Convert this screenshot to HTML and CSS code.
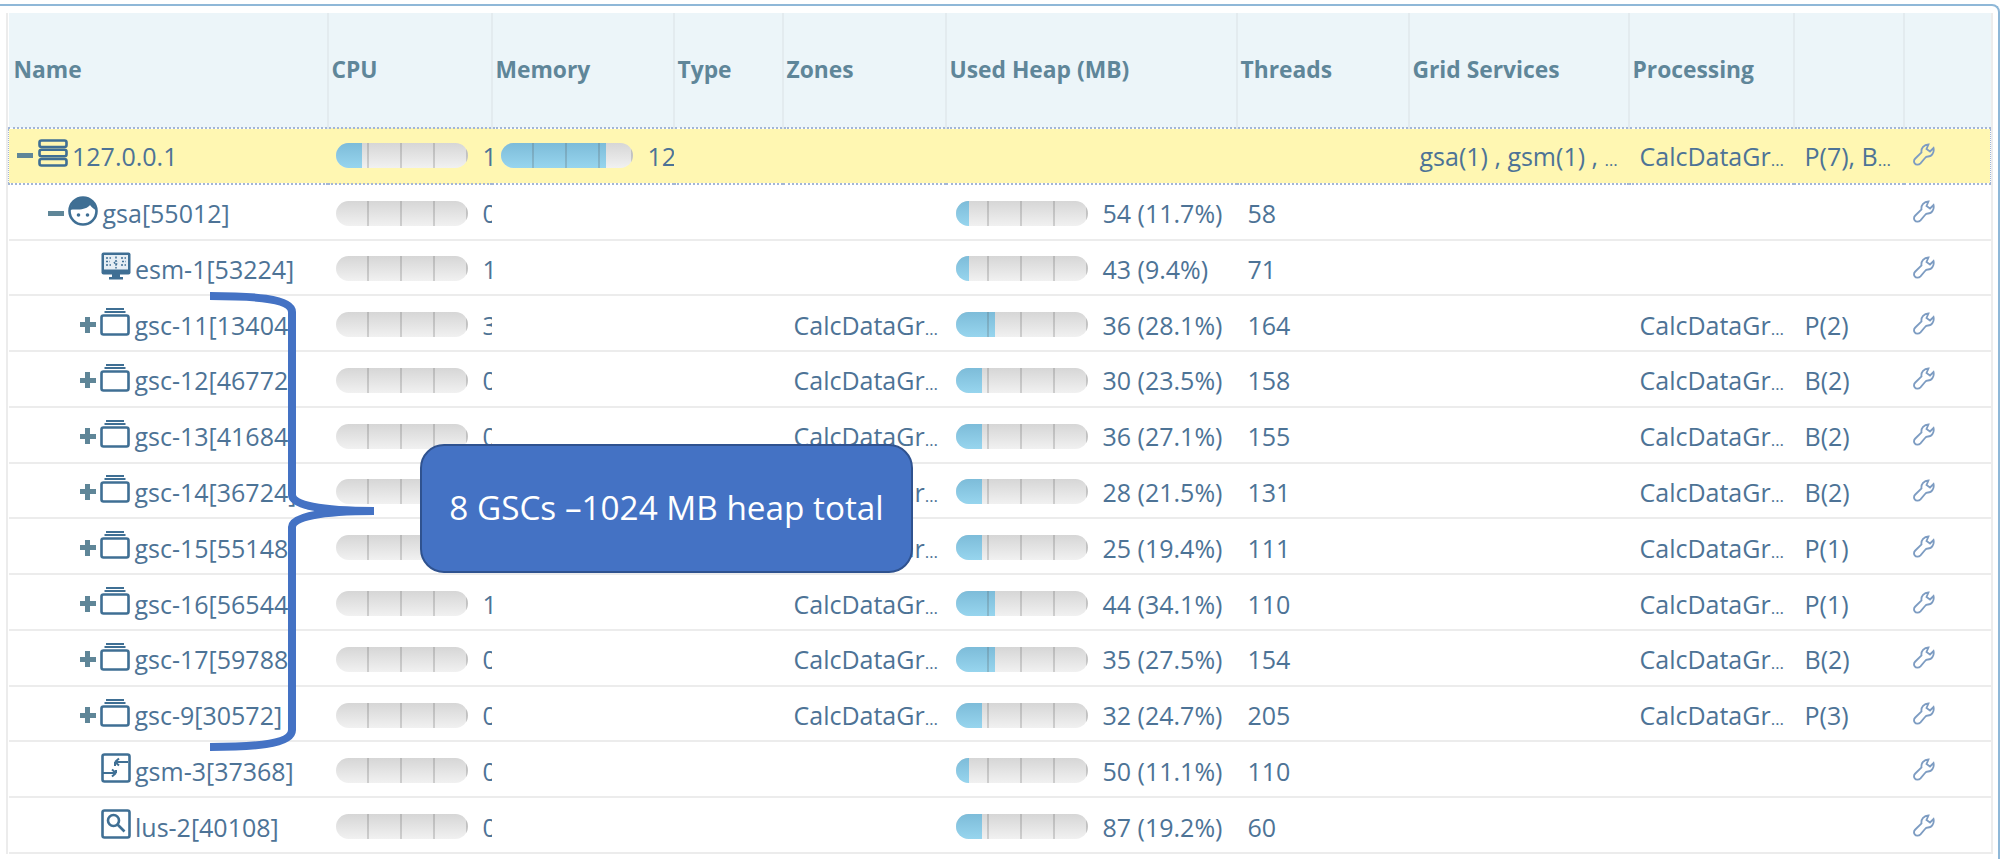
FILE: index.html
```html
<!DOCTYPE html>
<html lang="en">
<head>
    <meta charset="UTF-8">
    <meta name="viewport" content="width=device-width, initial-scale=1.0">
    <title>Hosts</title>
    <link rel="stylesheet" href="styles.css">
</head>
<body>
    <svg class="icon-defs" width="0" height="0">
        <symbol id="i-server" viewBox="0 0 30 28">
            <rect x="1.5" y="1.5" width="27" height="6.5" rx="2"/>
            <rect x="1.5" y="10.75" width="27" height="6.5" rx="2"/>
            <rect x="1.5" y="20" width="27" height="6.5" rx="2"/>
        </symbol>
        <symbol id="i-agent" viewBox="0 0 30 30">
            <circle cx="15" cy="15" r="13.5"/>
            <path class="solid" d="M2.5 14C3 6 8 1.5 15 1.5S27 6 27.5 14C25 12.5 23 10.5 22 9C20 12 14 14 8 13.5C6.5 13.4 4 13.5 2.5 14Z"/>
            <circle class="solid" cx="10.5" cy="19" r="1.8"/>
            <circle class="solid" cx="19.5" cy="19" r="1.8"/>
        </symbol>
        <symbol id="i-esm" viewBox="0 0 30 28">
            <rect class="solid" x="0.5" y="0.5" width="29" height="22" rx="2"/>
            <rect class="screen" x="3" y="3" width="24" height="14.5"/>
            <path class="solid" d="M11 22h8v3h3v2.500h-14v-2.500h3z"/>
            <path class="dots" d="M5 6h5M5 9.500h4M5 13h5M20 6h5M21 9.500h4M20 13h5M15 4.500v12M13 10l2 3 2-3"/>
        </symbol>
        <symbol id="i-gsc" viewBox="0 0 30 28">
            <path class="thin" d="M6 1h18M4.500 4h21"/>
            <rect x="1.500" y="7.500" width="27" height="19" rx="2"/>
        </symbol>
        <symbol id="i-gsm" viewBox="0 0 30 30">
            <rect x="1.500" y="1.500" width="27" height="27" rx="2"/>
            <path class="thin" d="M14 9h13M14 9l4-3.500M14 9l4 3.500M2 20h13M15 20l-4-3.500M15 20l-4 3.500M14 9v4M15 17v3"/>
        </symbol>
        <symbol id="i-lus" viewBox="0 0 30 30">
            <rect x="1.500" y="1.500" width="27" height="27" rx="2"/>
            <circle cx="12.500" cy="11.500" r="5.500"/>
            <path d="M16.500 15.500l7 7"/>
        </symbol>
        <symbol id="i-wrench" viewBox="0 0 22 23">
            <path d="M15.500 1.500L13.500 6L17 8.500L20.500 5C21.500 9 19 13.500 15 13.500C13.800 13.500 12.800 13.800 12 15L7.500 20.300C5.800 22 3 22.300 1.800 20.500C0.800 19 1 16.800 2.300 15.500L8.500 9.500C7.800 5 11 1.500 15.500 1.500Z"/>
        </symbol>
    </svg>

    <div class="panel">
        <div class="grid-wrap">
            <table class="host-table">
                <colgroup>
                    <col class="c-name"><col class="c-cpu"><col class="c-mem"><col class="c-type"><col class="c-zones">
                    <col class="c-heap"><col class="c-threads"><col class="c-services"><col class="c-proc"><col class="c-inst"><col class="c-act">
                </colgroup>
                <thead>
                    <tr>
                        <th>Name</th><th>CPU</th><th>Memory</th><th>Type</th><th>Zones</th>
                        <th>Used Heap (MB)</th><th>Threads</th><th>Grid Services</th><th>Processing</th><th></th><th></th>
                    </tr>
                </thead>
                <tbody>
                    <tr class="selected">
                        <td><div class="name level-0"><span class="toggle minus"></span><svg class="icon"><use href="#i-server"/></svg><span>127.0.0.1</span></div></td>
                        <td class="cpu"><div class="metric"><div class="meter"><div class="meter-fill" style="width:20%"></div></div><span>1</span></div></td>
                        <td class="mem"><div class="metric"><div class="meter"><div class="meter-fill" style="width:80%"></div></div><span>12</span></div></td>
                        <td></td><td></td><td></td><td></td>
                        <td>gsa(1) , gsm(1) , <span class="more">…</span></td>
                        <td>CalcDataGr<span class="more">…</span></td>
                        <td>P(7), B<span class="more">…</span></td>
                        <td><svg class="wrench"><use href="#i-wrench"/></svg></td>
                    </tr>
                    <tr>
                        <td><div class="name level-1"><span class="toggle minus"></span><svg class="icon tall"><use href="#i-agent"/></svg><span>gsa[55012]</span></div></td>
                        <td class="cpu"><div class="metric"><div class="meter"></div><span>0</span></div></td>
                        <td></td><td></td><td></td>
                        <td class="heap"><div class="metric"><div class="meter"><div class="meter-fill" style="width:10%"></div></div><span>54 (11.7%)</span></div></td>
                        <td>58</td><td></td><td></td><td></td>
                        <td><svg class="wrench"><use href="#i-wrench"/></svg></td>
                    </tr>
                    <tr>
                        <td><div class="name level-2"><svg class="icon"><use href="#i-esm"/></svg><span>esm-1[53224]</span></div></td>
                        <td class="cpu"><div class="metric"><div class="meter"></div><span>1</span></div></td>
                        <td></td><td></td><td></td>
                        <td class="heap"><div class="metric"><div class="meter"><div class="meter-fill" style="width:10%"></div></div><span>43 (9.4%)</span></div></td>
                        <td>71</td><td></td><td></td><td></td>
                        <td><svg class="wrench"><use href="#i-wrench"/></svg></td>
                    </tr>
                    <tr>
                        <td><div class="name level-1b"><span class="toggle plus"></span><svg class="icon"><use href="#i-gsc"/></svg><span>gsc-11[13404]</span></div></td>
                        <td class="cpu"><div class="metric"><div class="meter"></div><span>3</span></div></td>
                        <td></td><td></td><td>CalcDataGr<span class="more">…</span></td>
                        <td class="heap"><div class="metric"><div class="meter"><div class="meter-fill" style="width:30%"></div></div><span>36 (28.1%)</span></div></td>
                        <td>164</td><td></td><td>CalcDataGr<span class="more">…</span></td><td>P(2)</td>
                        <td><svg class="wrench"><use href="#i-wrench"/></svg></td>
                    </tr>
                    <tr>
                        <td><div class="name level-1b"><span class="toggle plus"></span><svg class="icon"><use href="#i-gsc"/></svg><span>gsc-12[46772]</span></div></td>
                        <td class="cpu"><div class="metric"><div class="meter"></div><span>0</span></div></td>
                        <td></td><td></td><td>CalcDataGr<span class="more">…</span></td>
                        <td class="heap"><div class="metric"><div class="meter"><div class="meter-fill" style="width:20%"></div></div><span>30 (23.5%)</span></div></td>
                        <td>158</td><td></td><td>CalcDataGr<span class="more">…</span></td><td>B(2)</td>
                        <td><svg class="wrench"><use href="#i-wrench"/></svg></td>
                    </tr>
                    <tr>
                        <td><div class="name level-1b"><span class="toggle plus"></span><svg class="icon"><use href="#i-gsc"/></svg><span>gsc-13[41684]</span></div></td>
                        <td class="cpu"><div class="metric"><div class="meter"></div><span>0</span></div></td>
                        <td></td><td></td><td>CalcDataGr<span class="more">…</span></td>
                        <td class="heap"><div class="metric"><div class="meter"><div class="meter-fill" style="width:20%"></div></div><span>36 (27.1%)</span></div></td>
                        <td>155</td><td></td><td>CalcDataGr<span class="more">…</span></td><td>B(2)</td>
                        <td><svg class="wrench"><use href="#i-wrench"/></svg></td>
                    </tr>
                    <tr>
                        <td><div class="name level-1b"><span class="toggle plus"></span><svg class="icon"><use href="#i-gsc"/></svg><span>gsc-14[36724]</span></div></td>
                        <td class="cpu"><div class="metric"><div class="meter"></div><span>0</span></div></td>
                        <td></td><td></td><td>CalcDataGr<span class="more">…</span></td>
                        <td class="heap"><div class="metric"><div class="meter"><div class="meter-fill" style="width:20%"></div></div><span>28 (21.5%)</span></div></td>
                        <td>131</td><td></td><td>CalcDataGr<span class="more">…</span></td><td>B(2)</td>
                        <td><svg class="wrench"><use href="#i-wrench"/></svg></td>
                    </tr>
                    <tr>
                        <td><div class="name level-1b"><span class="toggle plus"></span><svg class="icon"><use href="#i-gsc"/></svg><span>gsc-15[55148]</span></div></td>
                        <td class="cpu"><div class="metric"><div class="meter"></div><span>0</span></div></td>
                        <td></td><td></td><td>CalcDataGr<span class="more">…</span></td>
                        <td class="heap"><div class="metric"><div class="meter"><div class="meter-fill" style="width:20%"></div></div><span>25 (19.4%)</span></div></td>
                        <td>111</td><td></td><td>CalcDataGr<span class="more">…</span></td><td>P(1)</td>
                        <td><svg class="wrench"><use href="#i-wrench"/></svg></td>
                    </tr>
                    <tr>
                        <td><div class="name level-1b"><span class="toggle plus"></span><svg class="icon"><use href="#i-gsc"/></svg><span>gsc-16[56544]</span></div></td>
                        <td class="cpu"><div class="metric"><div class="meter"></div><span>1</span></div></td>
                        <td></td><td></td><td>CalcDataGr<span class="more">…</span></td>
                        <td class="heap"><div class="metric"><div class="meter"><div class="meter-fill" style="width:30%"></div></div><span>44 (34.1%)</span></div></td>
                        <td>110</td><td></td><td>CalcDataGr<span class="more">…</span></td><td>P(1)</td>
                        <td><svg class="wrench"><use href="#i-wrench"/></svg></td>
                    </tr>
                    <tr>
                        <td><div class="name level-1b"><span class="toggle plus"></span><svg class="icon"><use href="#i-gsc"/></svg><span>gsc-17[59788]</span></div></td>
                        <td class="cpu"><div class="metric"><div class="meter"></div><span>0</span></div></td>
                        <td></td><td></td><td>CalcDataGr<span class="more">…</span></td>
                        <td class="heap"><div class="metric"><div class="meter"><div class="meter-fill" style="width:30%"></div></div><span>35 (27.5%)</span></div></td>
                        <td>154</td><td></td><td>CalcDataGr<span class="more">…</span></td><td>B(2)</td>
                        <td><svg class="wrench"><use href="#i-wrench"/></svg></td>
                    </tr>
                    <tr>
                        <td><div class="name level-1b"><span class="toggle plus"></span><svg class="icon"><use href="#i-gsc"/></svg><span>gsc-9[30572]</span></div></td>
                        <td class="cpu"><div class="metric"><div class="meter"></div><span>0</span></div></td>
                        <td></td><td></td><td>CalcDataGr<span class="more">…</span></td>
                        <td class="heap"><div class="metric"><div class="meter"><div class="meter-fill" style="width:20%"></div></div><span>32 (24.7%)</span></div></td>
                        <td>205</td><td></td><td>CalcDataGr<span class="more">…</span></td><td>P(3)</td>
                        <td><svg class="wrench"><use href="#i-wrench"/></svg></td>
                    </tr>
                    <tr>
                        <td><div class="name level-2"><svg class="icon tall"><use href="#i-gsm"/></svg><span>gsm-3[37368]</span></div></td>
                        <td class="cpu"><div class="metric"><div class="meter"></div><span>0</span></div></td>
                        <td></td><td></td><td></td>
                        <td class="heap"><div class="metric"><div class="meter"><div class="meter-fill" style="width:10%"></div></div><span>50 (11.1%)</span></div></td>
                        <td>110</td><td></td><td></td><td></td>
                        <td><svg class="wrench"><use href="#i-wrench"/></svg></td>
                    </tr>
                    <tr>
                        <td><div class="name level-2"><svg class="icon tall"><use href="#i-lus"/></svg><span>lus-2[40108]</span></div></td>
                        <td class="cpu"><div class="metric"><div class="meter"></div><span>0</span></div></td>
                        <td></td><td></td><td></td>
                        <td class="heap"><div class="metric"><div class="meter"><div class="meter-fill" style="width:20%"></div></div><span>87 (19.2%)</span></div></td>
                        <td>60</td><td></td><td></td><td></td>
                        <td><svg class="wrench"><use href="#i-wrench"/></svg></td>
                    </tr>
                </tbody>
            </table>
        </div>
    </div>

    <!-- slide annotation drawn on top of the screenshot -->
    <svg class="brace" width="400" height="480" viewBox="200 285 400 480">
        <path d="M210 296C250 296 292 298 292 312L292 495C292 505 320 511 374 511C320 511 292 517 292 527L292 730C292 745 250 747 210 747"/>
    </svg>
    <div class="callout">8 GSCs –1024 MB heap total</div>
</body>
</html>
```

FILE: styles.css
```css
body {
    margin: 0;
    height: 859px;
    overflow: hidden;
    background-color: #fff;
    font-family: "Open Sans", sans-serif;
    font-size: 25px;
    color: #4d7396;
}

.icon-defs {
    display: block;
}

.panel {
    margin-top: 4px;
    height: 855px;
    box-sizing: border-box;
    padding: 7px 6px 0 8px;
    border-top: 2px solid #8fb8d8;
    border-right: 2px solid #8fb8d8;
    border-top-right-radius: 8px;
}

.grid-wrap {
    width: 1982px;
}

.host-table {
    width: 100%;
    table-layout: fixed;
    border-collapse: collapse;
    box-shadow: -2px 0 0 #ececec, 2px 0 0 #ececec;
}

.c-name { width: 319px; }
.c-cpu { width: 164px; }
.c-mem { width: 182px; }
.c-type { width: 109px; }
.c-zones { width: 163px; }
.c-heap { width: 291px; }
.c-threads { width: 172px; }
.c-services { width: 220px; }
.c-proc { width: 165px; }
.c-inst { width: 110px; }
.c-act { width: 87px; }

th {
    height: 115px;
    padding: 0 0 2px 3px;
    box-sizing: border-box;
    background-color: #ecf5f9;
    border-right: 2px solid #e3ebef;
    font-size: 22.8px;
    font-weight: 700;
    color: #5f8699;
    text-align: left;
}

th:first-child {
    padding-left: 5px;
}

th:last-child {
    border-right: none;
}

td {
    height: 55.77px;
    padding: 3px 0 0 11px;
    box-sizing: border-box;
    border-bottom: 2px solid #ececec;
    overflow: hidden;
    white-space: nowrap;
}

.selected td {
    background-color: #fff7b2;
    border-top: 2px dotted #a3b6d6;
    border-bottom: 2px dotted #a3b6d6;
    padding-top: 0;
}

.selected td:first-child {
    border-left: 1px dotted #a3b6d6;
}

.selected td:last-child {
    border-right: 1px dotted #a3b6d6;
}

.more {
    font-size: 17px;
}

.name {
    display: flex;
    align-items: center;
    gap: 4.5px;
}

td:first-child {
    padding-left: 0;
}

.level-0 { padding-left: 8px; }
.level-1 { padding-left: 39px; }
.level-1b { padding-left: 71px; }
.level-2 { padding-left: 92px; }

.toggle {
    flex: none;
    width: 16px;
    height: 16px;
    background: linear-gradient(#5f8698, #5f8698) center / 16px 5px no-repeat;
}

.plus {
    background:
        linear-gradient(#5f8698, #5f8698) center / 16px 5px no-repeat,
        linear-gradient(#5f8698, #5f8698) center / 5px 16px no-repeat;
}

.icon {
    flex: none;
    width: 30px;
    height: 28px;
    margin-top: -5px;
    fill: none;
    stroke: #3f6f94;
    stroke-width: 2.6;
}

.tall {
    height: 30px;
}

.solid {
    fill: #3f6f94;
    stroke: none;
}

.screen {
    fill: #e6eef4;
    stroke: none;
}

.dots {
    stroke-width: 1.5;
    stroke-dasharray: 2 1.5;
}

.thin {
    stroke-width: 2;
}

.metric {
    display: flex;
    align-items: center;
    gap: 15px;
}

.cpu {
    padding-left: 8px;
    overflow: visible;
}

.cpu .metric {
    width: 156px;
    overflow: hidden;
}

.mem {
    padding-left: 9px;
}

.heap {
    padding-left: 10px;
}

.meter {
    flex: none;
    position: relative;
    width: 132px;
    height: 25px;
    border-radius: 13px;
    overflow: hidden;
    background: linear-gradient(#d6d6d6, #f1f1f1);
}

.meter::after {
    content: "";
    position: absolute;
    inset: 0;
    background: repeating-linear-gradient(90deg, transparent 0 31.5px, rgba(80, 80, 80, 0.22) 31.5px 33px);
}

.meter-fill {
    height: 100%;
    background: linear-gradient(#7dbcd9, #97d5ee);
}

.wrench {
    display: block;
    width: 22px;
    height: 23px;
    margin: -3px 0 0 -2px;
    fill: none;
    stroke: #7d9cc2;
    stroke-width: 1.8;
}

.brace {
    position: absolute;
    left: 200px;
    top: 285px;
    fill: none;
    stroke: #4472c4;
    stroke-width: 8;
}

.callout {
    position: absolute;
    left: 420px;
    top: 444px;
    width: 493px;
    height: 129px;
    box-sizing: border-box;
    padding-bottom: 4px;
    display: flex;
    align-items: center;
    justify-content: center;
    background-color: #4472c4;
    border: 2px solid #2f528f;
    border-radius: 24px;
    color: #fff;
    font-size: 33.3px;
}
```
